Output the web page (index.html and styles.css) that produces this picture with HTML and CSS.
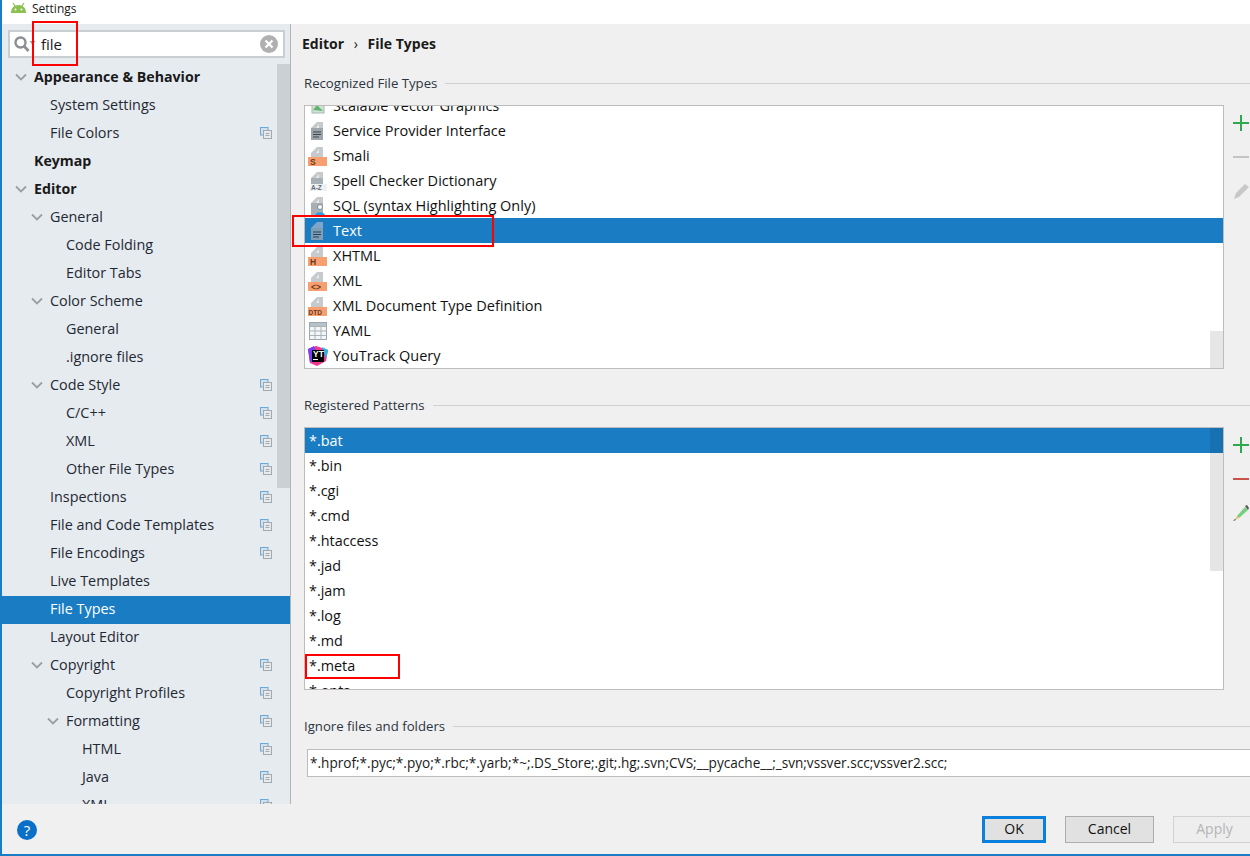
FILE: index.html
```html
<!DOCTYPE html>
<html lang="en">
<head>
  <meta charset="UTF-8" />
  <title>Settings</title>
  <link rel="stylesheet" href="styles.css">
</head>
<body>
  <svg class="defs" width="0" height="0">
    <symbol id="arrow" viewBox="0 0 12 12"><path d="M1 3.500 L6 8.500 L11 3.500" fill="none" stroke="#9a9fa3" stroke-width="1.800"/></symbol>
    <symbol id="copy" viewBox="0 0 12 12">
      <rect x="0.500" y="0.500" width="7.500" height="7.500" fill="#cfe0ee" stroke="#6fa8d4"/>
      <rect x="3.500" y="3.500" width="8" height="8" fill="#e6ebf0" stroke="#a4a8ab"/>
      <path d="M5.500 6.500 H9.500 M5.500 8.500 H9.500" stroke="#a4a8ab"/>
    </symbol>
    <symbol id="base" viewBox="0 0 20 20">
      <path d="M3 7 L9 1 H15 V12 H3 Z" fill="#c6cacd"/>
      <path d="M8 7 L11 3 V7 Z" fill="#e8eaeb"/>
    </symbol>
  </svg>

  <div class="window">
    <div class="titlebar">
      <svg class="android" viewBox="0 0 17 10" width="17" height="10"><path d="M1 10 C1 5 4 2 8.500 2 C13 2 16 5 16 10 Z" fill="#8cc152"/><path d="M3 0 L5 3 M14 0 L12 3" stroke="#8cc152" stroke-width="1.200"/><circle cx="5.500" cy="6.500" r="1" fill="#fff"/><circle cx="11.500" cy="6.500" r="1" fill="#fff"/></svg>
      <span>Settings</span>
    </div>

    <div class="main">
      <aside class="sidebar">
        <div class="search">
          <svg class="search-icon" viewBox="0 0 24 16" width="24" height="16"><circle cx="6.500" cy="6.500" r="5" fill="none" stroke="#8a8f93" stroke-width="2.400"/><path d="M10 10 L14.500 15" stroke="#8a8f93" stroke-width="2.800"/><path d="M15.500 5 H21.500 L18.500 9 Z" fill="#9a9fa3"/></svg>
          <span class="search-text">file</span>
          <svg class="clear-icon" viewBox="0 0 18 18" width="18" height="18"><circle cx="9" cy="9" r="9" fill="#b0b0b0"/><path d="M5.500 5.500 L12.500 12.500 M12.500 5.500 L5.500 12.500" stroke="#fff" stroke-width="2.200"/></svg>
        </div>
        <div class="tree-wrap">
          <ul class="tree">
            <li class="row bold lv0"><svg class="arrow"><use href="#arrow"/></svg>Appearance &amp; Behavior</li>
            <li class="row lv1">System Settings</li>
            <li class="row lv1">File Colors<svg class="copy"><use href="#copy"/></svg></li>
            <li class="row bold lv0">Keymap</li>
            <li class="row bold lv0"><svg class="arrow"><use href="#arrow"/></svg>Editor</li>
            <li class="row lv1"><svg class="arrow"><use href="#arrow"/></svg>General</li>
            <li class="row lv2">Code Folding</li>
            <li class="row lv2">Editor Tabs</li>
            <li class="row lv1"><svg class="arrow"><use href="#arrow"/></svg>Color Scheme</li>
            <li class="row lv2">General</li>
            <li class="row lv2">.ignore files</li>
            <li class="row lv1"><svg class="arrow"><use href="#arrow"/></svg>Code Style<svg class="copy"><use href="#copy"/></svg></li>
            <li class="row lv2">C/C++<svg class="copy"><use href="#copy"/></svg></li>
            <li class="row lv2">XML<svg class="copy"><use href="#copy"/></svg></li>
            <li class="row lv2">Other File Types<svg class="copy"><use href="#copy"/></svg></li>
            <li class="row lv1">Inspections<svg class="copy"><use href="#copy"/></svg></li>
            <li class="row lv1">File and Code Templates<svg class="copy"><use href="#copy"/></svg></li>
            <li class="row lv1">File Encodings<svg class="copy"><use href="#copy"/></svg></li>
            <li class="row lv1">Live Templates</li>
            <li class="row lv1 selected">File Types</li>
            <li class="row lv1">Layout Editor</li>
            <li class="row lv1"><svg class="arrow"><use href="#arrow"/></svg>Copyright<svg class="copy"><use href="#copy"/></svg></li>
            <li class="row lv2">Copyright Profiles<svg class="copy"><use href="#copy"/></svg></li>
            <li class="row lv2"><svg class="arrow"><use href="#arrow"/></svg>Formatting<svg class="copy"><use href="#copy"/></svg></li>
            <li class="row lv3">HTML<svg class="copy"><use href="#copy"/></svg></li>
            <li class="row lv3">Java<svg class="copy"><use href="#copy"/></svg></li>
            <li class="row lv3">XML<svg class="copy"><use href="#copy"/></svg></li>
          </ul>
          <div class="tree-thumb"></div>
        </div>
      </aside>

      <section class="content">
        <h1 class="crumbs">Editor <span class="sep">›</span> File Types</h1>

        <div class="group-title">Recognized File Types</div>
        <div class="list-row types-row">
          <div class="list">
            <ul class="items types">
              <li>
                <svg class="ficon" viewBox="0 0 20 20"><rect x="4" y="3" width="12" height="14" fill="#cfe3d2" stroke="#a9b3b8"/><path d="M5 14 L9 9 L15 15 Z" fill="#62b36f"/></svg>
                Scalable Vector Graphics
              </li>
              <li>
                <svg class="ficon" viewBox="0 0 20 20"><use href="#base"/><rect x="3" y="7" width="12" height="12" fill="#9ca6ac"/><path d="M5 11 H13 M5 13.500 H13 M5 16 H11" stroke="#3f474c"/></svg>
                Service Provider Interface
              </li>
              <li>
                <svg class="ficon" viewBox="0 0 20 20"><use href="#base"/><rect y="11" width="19" height="9" fill="#f79f6f"/><text x="2" y="19" class="ftext">S</text></svg>
                Smali
              </li>
              <li>
                <svg class="ficon" viewBox="0 0 20 20"><use href="#base"/><rect x="3" y="7" width="12" height="6" fill="#a7b0b5"/><path d="M1 20 L3 13 H19 V20 Z" fill="#eef0f1"/><text x="3" y="19" class="ftext small grey">A-Z</text></svg>
                Spell Checker Dictionary
              </li>
              <li>
                <svg class="ficon" viewBox="0 0 20 20"><use href="#base"/><rect x="3" y="7" width="12" height="13" fill="#a7b0b5"/><circle cx="12" cy="11" r="2.500" fill="#fff" stroke="#7d8a92"/><path d="M7 20 C7 15 17 15 17 20 Z" fill="#2d9ee8"/></svg>
                SQL (syntax Highlighting Only)
              </li>
              <li class="active">
                <svg class="ficon" viewBox="0 0 20 20"><path d="M3 7 L9 1 H15 V7 Z" fill="#7fa6c8"/><rect x="3" y="7" width="12" height="12" fill="#7f9db5"/><path d="M5 11 H13 M5 13.500 H13 M5 16 H11" stroke="#25435a"/></svg>
                Text
              </li>
              <li>
                <svg class="ficon" viewBox="0 0 20 20"><use href="#base"/><rect y="11" width="19" height="9" fill="#f79f6f"/><text x="2" y="19" class="ftext">H</text></svg>
                XHTML
              </li>
              <li>
                <svg class="ficon" viewBox="0 0 20 20"><use href="#base"/><rect y="11" width="19" height="9" fill="#f79f6f"/><text x="3" y="19" class="ftext">&lt;&gt;</text></svg>
                XML
              </li>
              <li>
                <svg class="ficon" viewBox="0 0 20 20"><use href="#base"/><rect y="11" width="19" height="9" fill="#f79f6f"/><text x="0.500" y="18.500" class="ftext small">DTD</text></svg>
                XML Document Type Definition
              </li>
              <li>
                <svg class="ficon" viewBox="0 0 20 20"><rect x="1.500" y="1.500" width="17" height="17" fill="#f4f6f7" stroke="#9aa7af"/><path d="M1.500 5.500 H18.500 M1.500 10 H18.500 M1.500 14.500 H18.500 M7 1.500 V18.500 M13 1.500 V18.500" stroke="#a9b4bb"/><rect x="2" y="2" width="16" height="3" fill="#b7c1c7"/></svg>
                YAML
              </li>
              <li>
                <svg class="ficon" viewBox="0 0 20 20"><path d="M0 3 L8 0 L20 4 L18 15 L9 20 L2 17 Z" fill="#f2378f"/><path d="M0 3 L6 0 L10 8 L2 17 Z" fill="#7a3df0"/><path d="M14 1 L20 4 L18 13 Z" fill="#20b7e6"/><rect x="4" y="4" width="12" height="12" fill="#000"/><text x="5" y="11" class="ftext white">YT</text><rect x="5" y="13" width="5" height="1" fill="#fff"/></svg>
                YouTrack Query
              </li>
            </ul>
            <div class="scroll-thumb types-thumb"></div>
          </div>
          <div class="tools">
            <svg class="tool" viewBox="0 0 16 16"><path d="M8 0 V16 M0 8 H16" stroke="#2fa84f" stroke-width="2"/></svg>
            <svg class="tool" viewBox="0 0 16 16"><path d="M0 8 H16" stroke="#c4c4c4" stroke-width="2"/></svg>
            <svg class="tool" viewBox="0 0 16 16"><path d="M1 16 L3 10 L12 1 L16 4 L6 14 Z" fill="#c8c8c8"/></svg>
          </div>
        </div>

        <div class="group-title">Registered Patterns</div>
        <div class="list-row patterns-row">
          <div class="list">
            <ul class="items patterns">
              <li class="active">*.bat</li>
              <li>*.bin</li>
              <li>*.cgi</li>
              <li>*.cmd</li>
              <li>*.htaccess</li>
              <li>*.jad</li>
              <li>*.jam</li>
              <li>*.log</li>
              <li>*.md</li>
              <li>*.meta</li>
              <li>*.opts</li>
            </ul>
            <div class="scroll-thumb patterns-thumb"></div>
          </div>
          <div class="tools">
            <svg class="tool" viewBox="0 0 16 16"><path d="M8 0 V16 M0 8 H16" stroke="#2fa84f" stroke-width="2"/></svg>
            <svg class="tool" viewBox="0 0 16 16"><path d="M0 8 H16" stroke="#c9534a" stroke-width="2"/></svg>
            <svg class="tool" viewBox="0 0 16 16"><path d="M4 11 L12 2 L15 5 L6 13 Z" fill="#74d07c"/><path d="M12 1 L14 0 L16 3 L15 5 Z" fill="#555"/><path d="M4 11 L6 13 L2 15 Z" fill="#f4b36a"/><path d="M0 16 L2 14 L3 15 Z" fill="#444"/></svg>
          </div>
        </div>

        <div class="group-title">Ignore files and folders</div>
        <div class="ignore">*.hprof;*.pyc;*.pyo;*.rbc;*.yarb;*~;.DS_Store;.git;.hg;.svn;CVS;__pycache__;_svn;vssver.scc;vssver2.scc;</div>
      </section>
    </div>

    <footer class="footer">
      <div class="help"><span>?</span></div>
      <div class="buttons">
        <button class="btn ok">OK</button>
        <button class="btn cancel">Cancel</button>
        <button class="btn apply">Apply</button>
      </div>
    </footer>

    <div class="mark mark-search"></div>
    <div class="mark mark-text"></div>
    <div class="mark mark-meta"></div>
  </div>
</body>
</html>
```

FILE: styles.css
```css
* {
  box-sizing: border-box;
  margin: 0;
  padding: 0;
}
html, body {
  width: 1250px;
  height: 856px;
  overflow: hidden;
}
body {
  font-family: "Open Sans", "Noto Sans", sans-serif;
  font-size: 14.400px;
  color: #1a1a1a;
  background: #f0f0f0;
}
ul { list-style: none; }
.defs { position: absolute; }

.window {
  position: relative;
  width: 1250px;
  height: 856px;
  display: flex;
  flex-direction: column;
  border-left: 2px solid #1a7dc4;
  border-bottom: 2px solid #1a7dc4;
}
.titlebar {
  height: 24px;
  flex: none;
  background: #fff;
  display: flex;
  align-items: flex-start;
  gap: 5px;
  padding: 1px 0 0 8px;
  font-size: 12px;
  line-height: 16px;
}
.android { margin-top: 2px; }

.main {
  flex: 1;
  display: flex;
  min-height: 0;
}

/* left tree */
.sidebar {
  width: 289px;
  flex: none;
  display: flex;
  flex-direction: column;
  background: #e6ebf0;
  border-right: 1px solid #b4b4b4;
}
.search {
  height: 28px;
  margin: 6px 5px 6px 6px;
  flex: none;
  display: flex;
  align-items: center;
  background: #fff;
  border: 2px solid #c9ced2;
  padding: 0 5px 0 4px;
}
.search-icon { flex: none; }
.search-text {
  flex: 1;
  margin-left: 3px;
  font-size: 15px;
}
.clear-icon { flex: none; }
.tree-wrap {
  position: relative;
  flex: 1;
  min-height: 0;
  overflow: hidden;
}
.row {
  position: relative;
  height: 28px;
  line-height: 25px;
  white-space: nowrap;
  color: #1f2933;
}
.bold { font-weight: 700; font-size: 14.200px; color: #1a1a1a; }
.lv0 { padding-left: 32px; }
.lv1 { padding-left: 48px; }
.lv2 { padding-left: 64px; }
.lv3 { padding-left: 80px; }
.row.selected { background: #1a7dc4; color: #fff; }
.arrow {
  position: absolute;
  top: 7px;
  width: 12px;
  height: 12px;
}
.lv0 .arrow { left: 13px; }
.lv1 .arrow { left: 29px; }
.lv2 .arrow { left: 45px; }
.copy {
  position: absolute;
  right: 18px;
  top: 7px;
  width: 12px;
  height: 12px;
}
.tree-thumb {
  position: absolute;
  right: 0;
  top: 0;
  width: 13px;
  height: 424px;
  background: #cbd0d4;
}

/* right side */
.content {
  flex: 1;
  min-width: 0;
  padding: 0 0 0 13px;
  overflow: hidden;
}
.crumbs {
  height: 40px;
  font-size: 14px;
  font-weight: 700;
  line-height: 40px;
  margin-left: -2px;
}
.sep { font-weight: 400; margin: 0 6px; }
.group-title {
  display: flex;
  align-items: center;
  gap: 8px;
  height: 18px;
  margin-top: 10px;
  font-size: 13.200px;
  line-height: 18px;
  color: #2b3540;
  white-space: nowrap;
}
.group-title::after {
  content: "";
  flex: 1;
  height: 1px;
  margin-top: 1px;
  background: #d0d0d0;
}
.list-row {
  display: flex;
  margin-top: 13px;
}
.types-row { height: 264px; margin-bottom: 27px; }
.patterns-row { height: 263px; margin-bottom: 27px; }
.list {
  position: relative;
  width: 920px;
  flex: none;
  background: #fff;
  border: 1px solid #bcbcbc;
  overflow: hidden;
}
.items li {
  height: 25px;
  line-height: 24px;
  white-space: nowrap;
  display: flex;
  align-items: center;
  color: #111;
}
.items li.active { background: #1a7dc4; color: #fff; }
.types { margin-top: -13px; font-size: 14.500px; }
.types li { padding-left: 3px; gap: 5px; }
.patterns li { padding-left: 4px; }
.ficon {
  width: 20px;
  height: 20px;
  flex: none;
}
.ftext {
  font-family: "Liberation Sans", sans-serif;
  font-size: 8.500px;
  font-weight: 700;
  fill: #6b3a1c;
}
.ftext.small { font-size: 6.500px; }
.ftext.grey { fill: #5d6b75; }
.ftext.white { fill: #fff; }
.scroll-thumb {
  position: absolute;
  right: 0;
  width: 13px;
}
.types-thumb {
  top: 225px;
  height: 38px;
  background: #e6e6e6;
}
.patterns-thumb {
  top: 0;
  height: 143px;
  background: rgba(0, 0, 0, 0.1);
}
.tools {
  flex: 1;
  display: flex;
  flex-direction: column;
  align-items: flex-start;
  gap: 18px;
  padding: 10px 0 0 9px;
}
.tool {
  width: 16px;
  height: 16px;
  flex: none;
}
.ignore {
  width: 960px;
  height: 28px;
  margin: 14px 0 0 3px;
  padding-left: 2px;
  background: #fff;
  border: 1px solid #bcbcbc;
  font-size: 13.600px;
  line-height: 26px;
  white-space: nowrap;
}

/* bottom bar */
.footer {
  height: 50px;
  flex: none;
  display: flex;
  align-items: center;
  justify-content: space-between;
  padding: 0 0 0 15px;
  overflow: hidden;
}
.help {
  width: 20px;
  height: 20px;
  margin-top: 2px;
  border-radius: 50%;
  background: #0a6fc9;
  color: #fff;
  font-size: 15px;
  line-height: 20px;
  text-align: center;
}
.buttons {
  display: flex;
  gap: 19px;
  margin-right: -6px;
}
.btn {
  height: 27px;
  padding-bottom: 2px;
  font-family: inherit;
  font-size: 14px;
  background: #e1e1e1;
  border: 1px solid #adadad;
  color: #111;
}
.ok { width: 64px; border: 3px solid #0a7fdc; }
.cancel { width: 89px; }
.apply {
  width: 83px;
  background: #eeeeee;
  border-color: #d2d2d2;
  color: #b5b5b5;
}

/* red annotations drawn on top of the screenshot */
.mark {
  position: absolute;
  border: 2px solid #f00;
}
.mark-search { left: 30px; top: 21px; width: 46px; height: 45px; }
.mark-text { left: 290px; top: 215px; width: 202px; height: 32px; }
.mark-meta { left: 303px; top: 654px; width: 95px; height: 25px; }
```
